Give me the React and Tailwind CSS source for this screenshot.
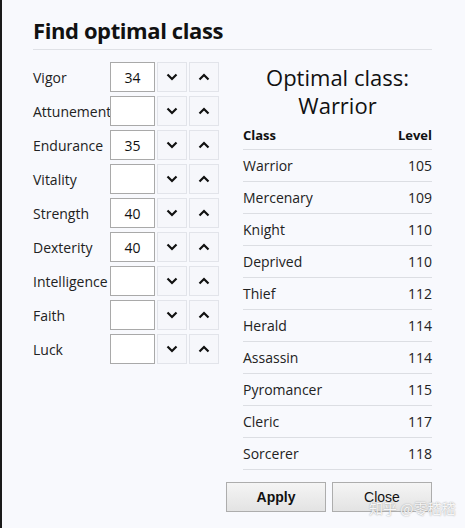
import React from "react";

const stats = [
  { name: "Vigor", value: "34" },
  { name: "Attunement", value: "" },
  { name: "Endurance", value: "35" },
  { name: "Vitality", value: "" },
  { name: "Strength", value: "40" },
  { name: "Dexterity", value: "40" },
  { name: "Intelligence", value: "" },
  { name: "Faith", value: "" },
  { name: "Luck", value: "" },
];

const classes = [
  ["Warrior", 105],
  ["Mercenary", 109],
  ["Knight", 110],
  ["Deprived", 110],
  ["Thief", 112],
  ["Herald", 114],
  ["Assassin", 114],
  ["Pyromancer", 115],
  ["Cleric", 117],
  ["Sorcerer", 118],
];

function Chevron({ up }) {
  return (
    <svg width="12" height="8" viewBox="0 0 12 8" fill="none">
      <path
        d={up ? "M1.5 6.5 L6 2 L10.5 6.5" : "M1.5 1.5 L6 6 L10.5 1.5"}
        stroke="#111"
        strokeWidth="2.2"
      />
    </svg>
  );
}

function StatRow({ name, value }) {
  return (
    <div className="flex items-center h-[30px]">
      <div className="w-[77px] text-[14px] text-[#222] whitespace-nowrap">{name}</div>
      <div className="relative w-[45px] h-[30px] bg-white border border-[#a9a9a9] flex items-center justify-center text-[14px] text-[#111]">
        {value}
      </div>
      <button className="ml-[2px] w-[30px] h-[30px] border border-[#e2e4ea] bg-[#f6f7fb] flex items-center justify-center">
        <Chevron />
      </button>
      <button className="ml-[2px] w-[30px] h-[30px] border border-[#e2e4ea] bg-[#f6f7fb] flex items-center justify-center">
        <Chevron up />
      </button>
    </div>
  );
}

export default function App() {
  return (
    <div
      className="w-[465px] h-[528px] bg-[#f8f9fd] border-l-2 border-[#1a1a1a] relative overflow-hidden"
      style={{ fontFamily: '"Open Sans", "Noto Sans", sans-serif' }}
    >
      <div className="pl-[31px] pr-[33px]">
        <h1 className="pt-[15px] text-[22px] font-bold text-[#111] leading-[30px] tracking-[-0.4px]">
          Find optimal class
        </h1>
        <div className="mt-[4px] h-px bg-[#dfe1e6]" />

        <div className="flex mt-[12px]">
          <div className="flex flex-col gap-[4px]">
            {stats.map((s) => (
              <StatRow key={s.name} {...s} />
            ))}
          </div>

          <div className="ml-[24px] flex-1">
            <div className="text-center text-[22px] leading-[28px] text-[#111] pt-[1px]">
              <div>Optimal class:</div>
              <div>Warrior</div>
            </div>
            <div className="mt-[3px] flex justify-between items-center h-[28px] text-[13px] font-bold text-[#111] border-b border-[#dcdee3]">
              <span>Class</span>
              <span>Level</span>
            </div>
            {classes.map(([c, l]) => (
              <div
                key={c}
                className="flex justify-between items-center h-[32px] text-[14px] text-[#222] border-b border-[#dcdee3]"
              >
                <span>{c}</span>
                <span>{l}</span>
              </div>
            ))}
          </div>
        </div>

        <div
          className="flex justify-end gap-[6px] mt-[12px]"
          style={{ fontFamily: '"Liberation Sans", Arial, sans-serif' }}
        >
          <button className="w-[100px] h-[30px] border border-[#adadad] bg-gradient-to-b from-[#f5f5f5] to-[#e3e3e3] text-[14px] font-bold text-[#111]">
            Apply
          </button>
          <button className="w-[100px] h-[30px] border border-[#adadad] bg-gradient-to-b from-[#f5f5f5] to-[#e3e3e3] text-[14px] text-[#111]">
            Close
          </button>
        </div>
      </div>
      <div
        className="absolute left-[367px] top-[499px] text-[14px] leading-[18px] text-white/90 whitespace-nowrap"
        style={{ fontFamily: '"Noto Sans CJK SC", sans-serif', textShadow: "0 0 1.5px #888" }}
      >
        知乎 @零嵇嵇
      </div>
    </div>
  );
}
